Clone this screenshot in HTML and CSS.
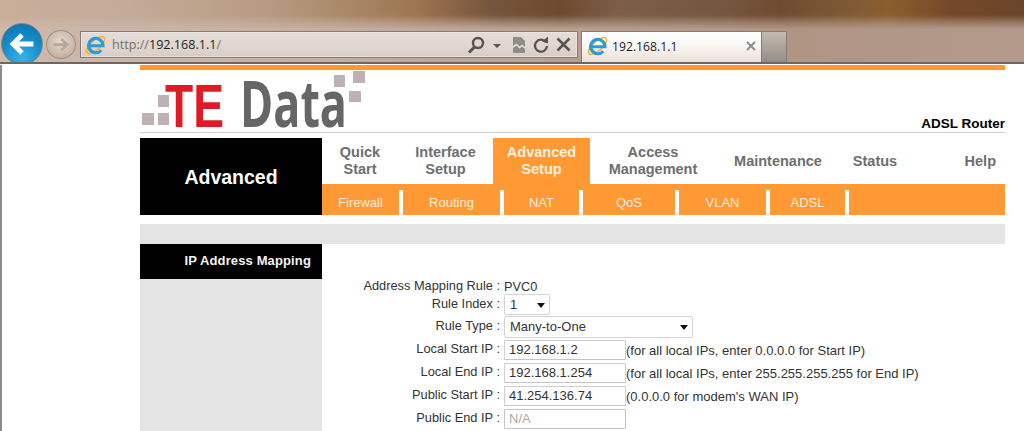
FILE: index.html
```html
<!DOCTYPE html>
<html lang="en">
<head>
<meta charset="utf-8">
<title>192.168.1.1</title>
<link rel="stylesheet" href="styles.css">
</head>
<body>
<svg class="defs" width="0" height="0" aria-hidden="true">
  <symbol id="ie" viewBox="0 0 24 24">
    <ellipse cx="12" cy="12" rx="13" ry="5.4" transform="rotate(-42 12 12)" fill="none" stroke="#f0b62e" stroke-width="1.8"/>
    <path d="M6 12.8H20.6A8.2 8.2 0 1 0 18.6 18" fill="none" stroke="#2b9bdc" stroke-width="3.6"/>
  </symbol>
</svg>
<header class="chrome">
  <div class="blur-a"></div>
  <div class="toolbar">
    <button class="back" aria-label="Back">
      <svg viewBox="0 0 42 42" width="42" height="42"><path d="M33 21H13M21 11.5L11.5 21L21 30.5" fill="none" stroke="#fff" stroke-width="5"/></svg>
    </button>
    <button class="forward" aria-label="Forward">
      <svg viewBox="0 0 30 30" width="28" height="28"><path d="M7 14.5H21M15.5 8.5L21.5 14.5L15.5 20.5" fill="none" stroke="#b7a79b" stroke-width="3"/></svg>
    </button>
    <div class="address">
      <svg class="ie-addr" width="21" height="22"><use href="#ie"/></svg>
      <span class="url"><span class="dim">http://</span>192.168.1.1<span class="dim">/</span></span>
      <svg class="addr-icon search" viewBox="0 0 18 18" width="18" height="18"><circle cx="11" cy="7" r="5" fill="none" stroke="#555" stroke-width="2.4"/><path d="M7.5 11L2 16.5" stroke="#555" stroke-width="3"/></svg>
      <svg class="addr-icon caret" viewBox="0 0 8 4" width="8" height="4"><path d="M0 0H8L4 4Z" fill="#555"/></svg>
      <svg class="addr-icon doc" viewBox="0 0 12 16" width="12" height="16"><path d="M0 0H8L12 4V16H0Z" fill="#8f8d8a"/><path d="M0 9L3.5 6.5L6.5 9.5L9 7.5L12 10V12L9 9.5L6.5 11.5L3.5 8.5L0 11Z" fill="#e6e0da"/></svg>
      <svg class="addr-icon reload" viewBox="0 0 16 17" width="16" height="17"><path d="M12.6 5.8A6 6 0 1 0 14 10" fill="none" stroke="#555" stroke-width="2.3"/><path d="M9 5.6L15 0.5V7.4Z" fill="#555"/></svg>
      <svg class="addr-icon stop" viewBox="0 0 15 15" width="15" height="15"><path d="M1.5 1.5L13.5 13.5M13.5 1.5L1.5 13.5" stroke="#555" stroke-width="2.6"/></svg>
    </div>
    <div class="tab">
      <svg class="ie-tab" width="21" height="22"><use href="#ie"/></svg>
      <span class="tab-title">192.168.1.1</span>
      <svg class="tab-close" viewBox="0 0 10 10" width="10" height="10"><path d="M1 1L9 9M9 1L1 9" stroke="#8d8d8d" stroke-width="2"/></svg>
    </div>
    <div class="new-tab"></div>
  </div>
</header>

<div class="page">
  <div class="router">
    <div class="masthead">
      <svg class="logo" viewBox="0 0 226 62" width="226" height="62" role="img" aria-label="TE Data">
        <rect class="sq" x="2" y="43" width="12" height="12"/>
        <rect class="sq" x="18" y="43" width="11" height="12"/>
        <rect class="sq" x="18" y="25" width="11" height="12"/>
        <rect class="sq" x="194" y="5" width="11" height="12"/>
        <rect class="sq" x="213" y="1" width="12" height="12"/>
        <rect class="sq" x="209" y="21" width="12" height="11"/>
        <text class="logo-te" x="25" y="57" textLength="59" lengthAdjust="spacingAndGlyphs">TE</text>
        <text class="logo-data" x="100" y="57" textLength="107" lengthAdjust="spacingAndGlyphs">Data</text>
      </svg>
      <div class="model">ADSL Router</div>
    </div>

    <div class="menu">
      <div class="section">Advanced</div>
      <div class="menu-main">
        <nav class="tabs">
          <a class="t1">Quick<br>Start</a>
          <a class="t2">Interface<br>Setup</a>
          <a class="t3 active">Advanced<br>Setup</a>
          <a class="t4">Access<br>Management</a>
          <a class="t5">Maintenance</a>
          <a class="t6">Status</a>
          <a class="t7">Help</a>
        </nav>
        <nav class="subtabs">
          <a class="s1">Firewall</a>
          <a class="s2">Routing</a>
          <a class="s3">NAT</a>
          <a class="s4">QoS</a>
          <a class="s5">VLAN</a>
          <a class="s6">ADSL</a>
          <a class="s7"></a>
        </nav>
      </div>
    </div>

    <div class="greybar"></div>

    <div class="content">
      <aside class="side">
        <div class="side-title">IP Address Mapping</div>
      </aside>
      <form class="form">
        <div class="row r-text"><label>Address Mapping Rule :</label><span class="val">PVC0</span></div>
        <div class="row r-idx"><label>Rule Index :</label><span class="sel sel-s"><select><option>1</option></select></span></div>
        <div class="row"><label>Rule Type :</label><span class="sel sel-l"><select><option>Many-to-One</option></select></span></div>
        <div class="row"><label>Local Start IP :</label><input value="192.168.1.2"><span class="hint">(for all local IPs, enter 0.0.0.0 for Start IP)</span></div>
        <div class="row"><label>Local End IP :</label><input value="192.168.1.254"><span class="hint">(for all local IPs, enter 255.255.255.255 for End IP)</span></div>
        <div class="row"><label>Public Start IP :</label><input value="41.254.136.74"><span class="hint">(0.0.0.0 for modem's WAN IP)</span></div>
        <div class="row"><label>Public End IP :</label><input class="off" value="N/A" disabled></div>
      </form>
    </div>
  </div>
</div>
</body>
</html>
```
FILE: styles.css
```css
* { box-sizing: border-box; }
html, body { margin: 0; height: 431px; overflow: hidden; background: #fff; }
body { font-family: "Liberation Sans", Arial, sans-serif; color: #333; }
.defs { position: absolute; }

/* browser chrome */
.chrome {
  position: relative;
  height: 64px;
  overflow: hidden;
  background: linear-gradient(to right, #c9ae9a 0, #c4aa97 130px, #b89c84 260px, #ab8a6a 340px, #9c7450 420px, #76563c 490px, #6e4b30 560px, #7d5e47 620px, #75573f 720px, #6f4c31 780px, #7f5a34 850px, #8a5f2e 890px, #74492a 950px, #6a4529 1024px);
}
.blur-a {
  position: absolute;
  inset: 0;
  background: linear-gradient(to right, #cdb9ac 0, #c6b0a2 300px, #b89f8f 580px, #b09585 800px, #b39a8b 1024px);
  -webkit-mask-image: linear-gradient(to bottom, transparent 15px, rgba(0,0,0,.55) 22px, #000 29px);
  mask-image: linear-gradient(to bottom, transparent 15px, rgba(0,0,0,.55) 22px, #000 29px);
}
.chrome::after {
  content: "";
  position: absolute;
  left: 0; right: 0; bottom: 0;
  height: 2px;
  background: #6a6765;
}
.toolbar {
  position: relative;
  display: flex;
  align-items: flex-start;
  padding: 23px 0 0 1px;
  height: 62px;
  overflow: hidden;
}
.back {
  flex: none;
  width: 42px; height: 42px;
  margin: 0; padding: 0;
  border: 1px solid #8a8178;
  border-radius: 50%;
  background: radial-gradient(circle at 50% 85%, #35b3ec 0, #1489c9 55%, #0f6fa8 100%);
  display: flex; align-items: center; justify-content: center;
}
.forward {
  flex: none;
  width: 30px; height: 29px;
  margin: 7px 0 0 3px; padding: 0;
  border: 1px solid #a08f83;
  border-radius: 50%;
  background: radial-gradient(circle at 50% 40%, #e6dad0, #b9a293);
  display: flex; align-items: center; justify-content: center;
}
.address {
  flex: none;
  display: flex;
  align-items: center;
  width: 498px; height: 27px;
  margin: 8px 0 0 4px;
  border: 1px solid #857c76;
  background: linear-gradient(to bottom, #e5dcd6, #e0d6cf 60%, #d8cdc5);
  box-shadow: inset 0 0 0 1px rgba(255,255,255,.35);
}
.ie-addr { margin-left: 4px; flex: none; }
.url { margin-left: 6px; font: 12.6px "Open Sans", sans-serif; color: #1f1f1f; }
.dim { color: #77706b; }
.addr-icon { flex: none; }
.search { margin-left: auto; }
.caret { margin: 2px 0 0 8px; }
.doc { margin-left: 12px; }
.reload { margin-left: 8px; }
.stop { margin: 0 6px 0 7px; }
.tab {
  flex: none;
  display: flex;
  align-items: center;
  width: 181px; height: 31px;
  margin: 8px 0 0 3px;
  padding-bottom: 2px;
  border: 1px solid #857c76;
  border-bottom: 0;
  background: linear-gradient(to bottom, #fff 0, #fbf9f7 40%, #ebe0d8 100%);
}
.ie-tab { margin-left: 5px; flex: none; }
.tab-title { margin-left: 4px; font: 12.2px "Open Sans", sans-serif; color: #1a1a1a; }
.tab-close { margin: 0 5px 0 auto; }
.new-tab {
  flex: none;
  width: 25px; height: 31px;
  margin-top: 8px;
  border: 1px solid #857c76;
  border-left: 0;
  border-bottom: 0;
  background: linear-gradient(to bottom, #c2b9b1, #958d87);
}

/* router page */
.page {
  height: 367px;
  padding-left: 138px;
  border-left: 2px solid #8b8b8b;
}
.router { width: 865px; border-top: 5px solid #ff9933; margin-top: 1px; }
.masthead {
  position: relative;
  height: 63px;
  border-bottom: 1px solid #cfcfcf;
  display: flex;
  align-items: flex-end;
  justify-content: space-between;
}
.logo { display: block; flex: none; align-self: flex-start; overflow: visible; }
.sq { fill: #bfb0b3; }
.logo-te { font: bold 62px "Liberation Sans", sans-serif; fill: #e21a25; }
.logo-data { font: bold 64px "Open Sans", sans-serif; fill: #666; }
.model { font-size: 13.5px; font-weight: bold; color: #000; line-height: 16px; }

.menu { display: flex; margin-top: 5px; height: 77px; }
.section {
  flex: none;
  width: 182px;
  padding-top: 2px;
  background: #000;
  color: #fff;
  font-size: 19.5px;
  font-weight: bold;
  display: flex;
  align-items: center;
  justify-content: center;
}
.menu-main { flex: 1; }
.tabs {
  display: grid;
  grid-template-columns: 76px 95px 97px 126px 124px 70px 95px;
  height: 46px;
  font-size: 14.5px;
  font-weight: bold;
  line-height: 17px;
  color: #6e6e6e;
}
.tabs a { display: flex; align-items: center; justify-content: center; text-align: center; }
.tabs .active { background: #ff9933; color: #fdf0e2; }
.tabs .t7 { justify-content: flex-end; padding-right: 9px; }
.subtabs {
  display: flex;
  height: 31px;
  gap: 4px;
  padding-top: 6px;
  background: linear-gradient(to bottom, #ff9933 6px, #fff 6px);
  font-size: 13px;
  color: #fdeede;
}
.subtabs a { display: flex; align-items: center; justify-content: center; background: #ff9933; flex: none; }
.s1 { width: 77px; }
.s2 { width: 97px; }
.s3 { width: 75px; }
.s4 { width: 92px; }
.s5 { width: 87px; }
.s6 { width: 75px; }
.subtabs .s7 { flex: 1; }

.greybar { height: 20px; margin-top: 9px; background: #e4e4e4; }

.content { display: flex; height: 187px; }
.side { flex: none; width: 182px; background: #e4e4e4; }
.side-title {
  height: 35px;
  background: #000;
  color: #f4f4f4;
  font-size: 13px;
  font-weight: bold;
  letter-spacing: .01em;
  line-height: 34px;
  text-align: right;
  padding-right: 11px;
}
.form { flex: 1; padding-top: 35px; font-size: 12.8px; color: #333; }
.row { display: flex; align-items: center; height: 23px; }
.r-text { height: 14px; }
.r-idx { height: 22px; }
.row label { flex: none; width: 178px; text-align: right; margin-right: 4px; position: relative; top: -1px; }
.val { color: #333; }
input {
  flex: none;
  width: 122px; height: 20px;
  padding: 0 0 0 4px;
  border: 1px solid #cfcfcf;
  border-bottom-color: #c4c4c4;
  border-radius: 1px;
  background: #fff;
  font: 13px "Liberation Sans", sans-serif;
  color: #333;
}
input.off { color: #a8a8a8; background: #fff; border-color: #c4c4c4; }
.hint { margin: 2px 0 0 0; white-space: nowrap; font-size: 13px; }
.sel { position: relative; display: block; flex: none; height: 22px; }
.sel-s { width: 46px; height: 21px; }
.sel-l { width: 189px; }
.sel select {
  appearance: none;
  display: block;
  width: 100%; height: 100%;
  padding: 0 0 0 5px;
  border: 1px solid #d4d4d4;
  border-radius: 2px;
  background: #fff;
  font: 13px "Liberation Sans", sans-serif;
  color: #333;
}
.sel::after {
  content: "";
  position: absolute;
  right: 5px; top: 9px;
  border: 4px solid transparent;
  border-top: 5px solid #111;
  border-bottom: 0;
  width: 0; height: 0;
}
```
